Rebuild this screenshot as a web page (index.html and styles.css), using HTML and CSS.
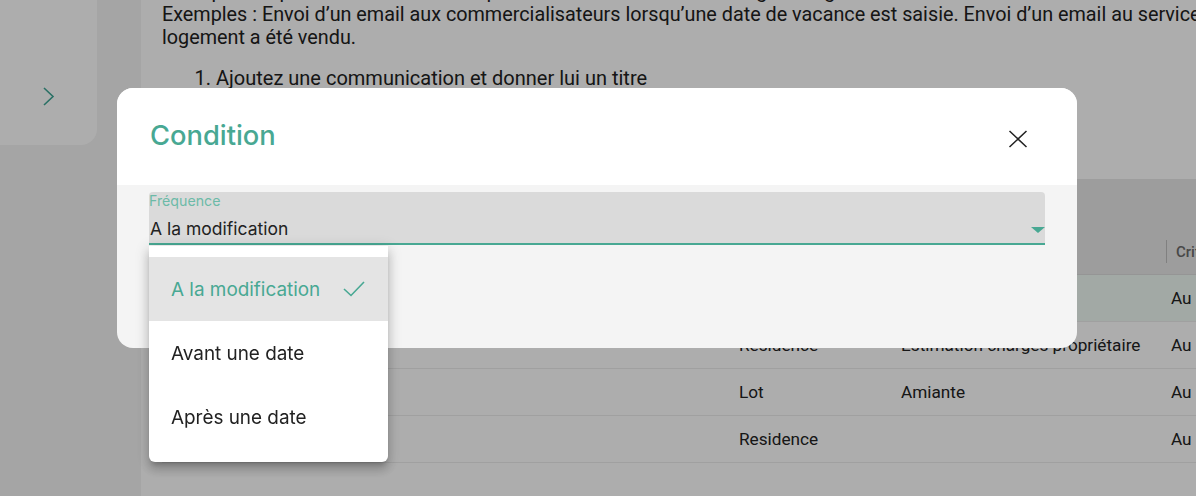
FILE: index.html
```html
<!DOCTYPE html>
<html lang="fr">
<head>
<meta charset="utf-8">
<title>Condition</title>
<link rel="stylesheet" href="styles.css">
</head>
<body>
<div class="page">
  <aside class="sidebar">
    <div class="side-card">
      <svg class="chevron" width="12" height="20" viewBox="0 0 12 20"><polyline points="1,1 10,9.5 1,18" fill="none" stroke="#3ea695" stroke-width="1.6"/></svg>
    </div>
  </aside>
  <main class="main">
    <p class="intro">Vous pouvez paramétrer des envois qui se déclenchent selon des règles de gestion.<br>Exemples : Envoi d’un email aux commercialisateurs lorsqu’une date de vacance est saisie. Envoi d’un email au service gestion lorsqu’un<br>logement a été vendu.</p>
    <ol class="steps">
      <li>Ajoutez une communication et donner lui un titre</li>
    </ol>
    <div class="table">
      <div class="thead">
        <div class="th">Titre</div>
        <div class="th">Objet</div>
        <div class="th">Document</div>
        <div class="th th-sep"><span class="sep"></span><span>Critère</span></div>
      </div>
      <div class="tr tr-active">
        <div class="td">Vente d’un logement</div>
        <div class="td">Lot</div>
        <div class="td">Acte de vente</div>
        <div class="td">Au</div>
      </div>
      <div class="tr">
        <div class="td">Estimation des charges</div>
        <div class="td">Residence</div>
        <div class="td">Estimation charges propriétaire</div>
        <div class="td">Au</div>
      </div>
      <div class="tr">
        <div class="td">Diagnostic amiante</div>
        <div class="td">Lot</div>
        <div class="td">Amiante</div>
        <div class="td">Au</div>
      </div>
      <div class="tr">
        <div class="td">Assemblée générale</div>
        <div class="td">Residence</div>
        <div class="td"></div>
        <div class="td">Au</div>
      </div>
    </div>
  </main>
</div>

<div class="backdrop"></div>

<div class="modal">
  <div class="modal-head">
    <h2 class="modal-title">Condition</h2>
    <button class="close" aria-label="Fermer">
      <svg width="24" height="24" viewBox="0 0 24 24"><path d="M3.5 4 L20.5 20 M20.5 4 L3.5 20" stroke="#222" stroke-width="1.5" fill="none"/></svg>
    </button>
  </div>
  <div class="modal-body">
    <div class="field">
      <div class="field-label">Fréquence</div>
      <div class="field-row">
        <span class="field-value">A la modification</span>
        <span class="arrow"></span>
      </div>
    </div>
  </div>
</div>

<ul class="menu">
  <li class="menu-item selected">
    <span>A la modification</span>
    <svg width="24" height="24" viewBox="0 0 24 24"><polyline points="2,12 9,18.5 22,5" fill="none" stroke="#48a893" stroke-width="1.6"/></svg>
  </li>
  <li class="menu-item"><span>Avant une date</span></li>
  <li class="menu-item"><span>Après une date</span></li>
</ul>
</body>
</html>
```

FILE: styles.css
```css
* { box-sizing: border-box; }

html, body {
  margin: 0;
  height: 100%;
  overflow: hidden;
}

body {
  font-family: Roboto, "Liberation Sans", sans-serif;
  color: #212121;
  background: #ffffff;
}

.page {
  display: flex;
  height: 496px;
}

.sidebar {
  width: 141px;
  flex: none;
  background: #f4f4f4;
}

.side-card {
  width: 97px;
  height: 145px;
  background: #ffffff;
  border-bottom-right-radius: 16px;
  display: flex;
  justify-content: center;
  padding-top: 87px;
  padding-left: 1px;
}

.chevron { display: block; }

.main {
  flex: 1;
  min-width: 0;
  padding-left: 21px;
  overflow: hidden;
  background: #ffffff;
}

.intro {
  margin: -20px 0 0;
  font-size: 19.8px;
  line-height: 23px;
  white-space: nowrap;
}

.steps {
  margin: 18px 0 0;
  padding-left: 54px;
  font-size: 20px;
  line-height: 23px;
}

.table {
  margin-top: 89px;
  width: 1200px;
  font-size: 17.2px;
}

.thead,
.tr {
  display: grid;
  grid-template-columns: 561px 162px 270px 207px;
}

.thead {
  height: 96px;
  background: #e8e8e8;
  align-items: end;
  padding-bottom: 11px;
  border-bottom: 1px solid #dcdcdc;
}

.th {
  padding-left: 16px;
  font-size: 15px;
  line-height: 20px;
  font-weight: 500;
  color: #6a6a6a;
}

.th-sep {
  display: flex;
  align-items: center;
  gap: 9px;
  padding-left: 11px;
}

.sep {
  width: 1px;
  height: 23px;
  background: #bdbdbd;
}

.tr {
  height: 47px;
  align-items: center;
  border-bottom: 1px solid #ececec;
}

.tr-active { background: #eff9f4; }

.td {
  padding-left: 16px;
  white-space: nowrap;
  color: #222;
}

.backdrop {
  position: fixed;
  inset: 0;
  background: rgba(0, 0, 0, 0.32);
}

.modal {
  position: fixed;
  left: 117px;
  top: 88px;
  width: 960px;
  height: 260px;
  border-radius: 16px;
  overflow: hidden;
  background: #f4f4f4;
  font-family: Inter, "Noto Sans", sans-serif;
}

.modal-head {
  height: 97px;
  background: #ffffff;
  display: flex;
  align-items: center;
  justify-content: space-between;
  padding: 0 47px 0 33px;
}

.modal-title {
  margin: 0 0 2px;
  font-size: 27.3px;
  font-weight: 500;
  color: #48a893;
}

.close {
  border: 0;
  background: none;
  padding: 0;
  margin-top: 5px;
  width: 24px;
  height: 24px;
  display: flex;
}

.modal-body {
  padding: 7px 32px;
}

.field {
  height: 53px;
  background: #dadada;
  border-radius: 4px 4px 0 0;
  border-bottom: 2px solid #48a893;
  padding-top: 1px;
}

.field-label {
  font-size: 14.2px;
  line-height: 16px;
  color: #6cbaa8;
}

.field-row {
  margin-top: 8px;
  display: flex;
  align-items: center;
  justify-content: space-between;
  height: 24px;
}

.field-value {
  font-size: 17.5px;
  line-height: 24px;
  color: #222;
  padding-left: 1px;
}

.arrow {
  width: 0;
  height: 0;
  border-left: 7px solid transparent;
  border-right: 7px solid transparent;
  border-top: 6px solid #48a893;
  margin-top: 2px;
}

.menu {
  position: fixed;
  left: 149px;
  top: 246px;
  width: 239px;
  margin: 0;
  padding: 11px 0 13px;
  list-style: none;
  background: #ffffff;
  border-radius: 0 0 6px 6px;
  box-shadow: 0 5px 5px -3px rgba(0,0,0,0.2), 0 8px 10px 1px rgba(0,0,0,0.14), 0 3px 14px 2px rgba(0,0,0,0.12);
  font-family: Inter, "Noto Sans", sans-serif;
}

.menu-item {
  height: 64px;
  display: flex;
  align-items: center;
  justify-content: space-between;
  padding: 0 22px 0 22px;
  font-size: 18.9px;
  color: #222;
}

.menu-item.selected {
  background: #e4e4e4;
  color: #48a893;
}
```
